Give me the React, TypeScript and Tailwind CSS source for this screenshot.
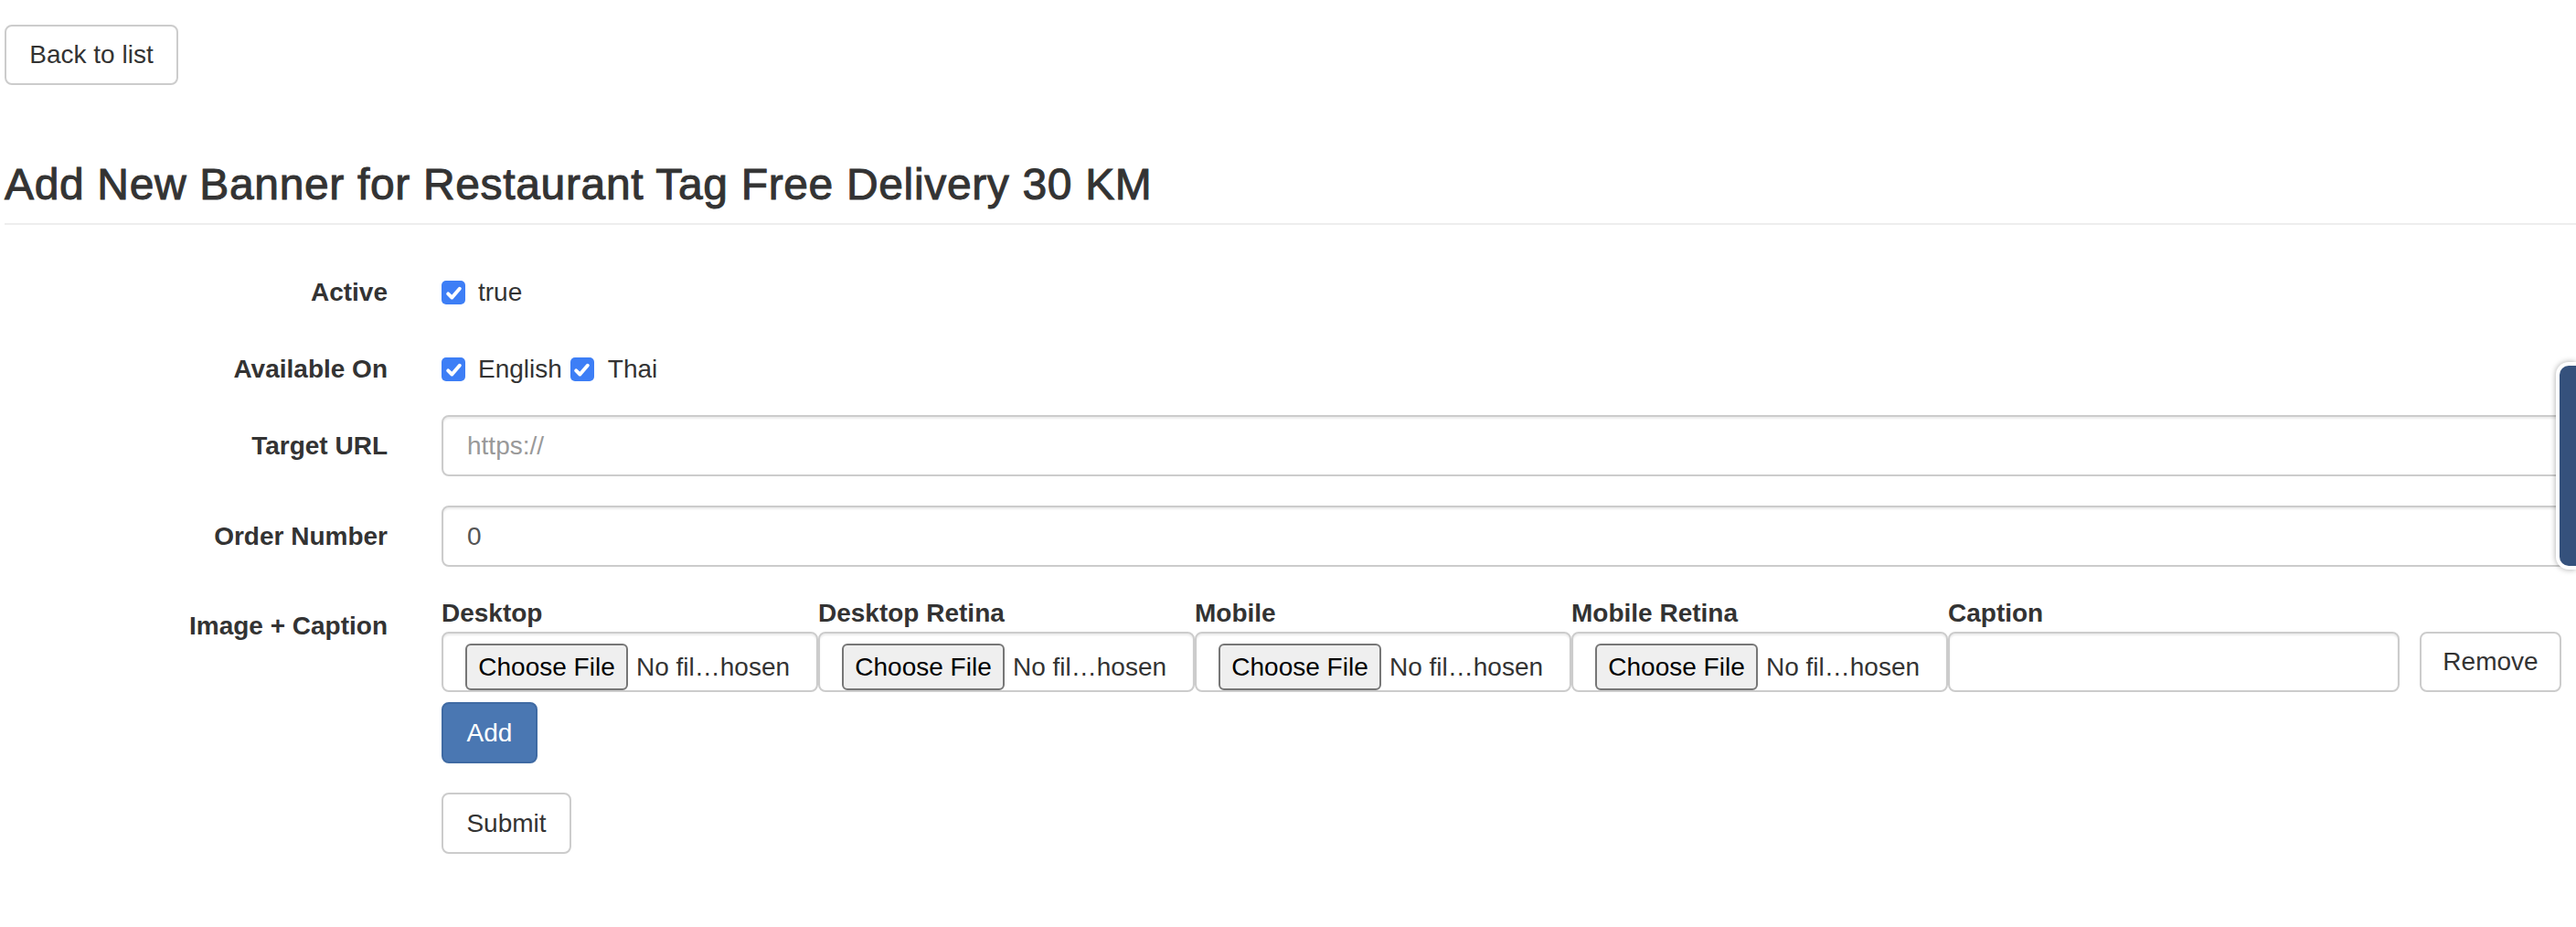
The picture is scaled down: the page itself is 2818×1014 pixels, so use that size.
import React from "react";

const Check = () => (
    <span className="inline-flex items-center justify-center w-[26px] h-[26px] rounded-[5px] bg-[#3d7ef6] shrink-0">
        <svg viewBox="0 0 16 16" className="w-[21px] h-[21px]">
            <path d="M3.2 8.6 L6.4 11.8 L12.8 4.4" fill="none" stroke="white" strokeWidth="3" strokeLinecap="round" strokeLinejoin="round" />
        </svg>
    </span>
);

const FileBox = () => (
    <div className="h-[66px] border-2 border-[#ccc] rounded-[8px] bg-white pl-[24px] pt-[11px] flex items-start overflow-hidden shadow-[inset_0_2px_2px_rgba(0,0,0,0.075)]">
        <span className="h-[51px] w-[178px] shrink-0 border-2 border-[#767676] rounded-[6px] bg-[#efefef] text-black flex items-center justify-center leading-[40px]">
            Choose File
        </span>
        <span className="ml-[9px] mt-[6px] whitespace-nowrap text-[#333]">No fil…hosen</span>
    </div>
);

function FormRow({ label, children, className = "" }: { label: string; children: React.ReactNode; className?: string }) {
    return (
        <div className={"flex " + className}>
            <div className="w-[424px] shrink-0 text-right font-bold pt-[14px]">{label}</div>
            <div className="ml-[59px] flex-1 min-w-0">{children}</div>
        </div>
    );
}

export default function App() {
    const columns = ["Desktop", "Desktop Retina", "Mobile", "Mobile Retina"];
    return (
        <div className="min-h-screen bg-white text-[#333] font-['Liberation_Sans',Arial,sans-serif] text-[28px] leading-[40px] overflow-hidden">
            <div className="pl-[5px] pt-[27px]">
                <button className="h-[66px] w-[190px] border-2 border-[#ccc] rounded-[8px] bg-white text-[#333]">
                    Back to list
                </button>
            </div>

            <div className="ml-[5px] mt-[82px] pb-[16px] border-b-2 border-[#eee]">
                <h3 className="text-[48px] leading-[53px] font-medium [-webkit-text-stroke:1px_#333] tracking-[0.65px]">
                    Add New Banner for Restaurant Tag Free Delivery 30 KM
                </h3>
            </div>

            <form className="mt-[40px]">
                <FormRow label="Active" className="mb-[30px]">
                    <div className="pt-[14px] h-[54px] flex items-start">
                        <div className="h-[40px] flex items-center">
                            <Check />
                            <span className="ml-[14px]">true</span>
                        </div>
                    </div>
                </FormRow>

                <FormRow label="Available On" className="mb-[30px]">
                    <div className="pt-[14px] h-[54px] flex items-start">
                        <div className="h-[40px] flex items-center">
                            <Check />
                            <span className="ml-[14px]">English</span>
                            <span className="ml-[9px] flex items-center">
                                <Check />
                            </span>
                            <span className="ml-[15px]">Thai</span>
                        </div>
                    </div>
                </FormRow>

                <FormRow label="Target URL" className="mb-[32px]">
                    <input
                        className="block w-full h-[67px] border-2 border-[#ccc] rounded-[8px] pl-[26px] text-[#555] placeholder:text-[#999] outline-none shadow-[inset_0_2px_2px_rgba(0,0,0,0.075)]"
                        placeholder="https://"
                    />
                </FormRow>

                <FormRow label="Order Number" className="mb-[31px]">
                    <input
                        className="block w-full h-[67px] border-2 border-[#ccc] rounded-[8px] pl-[26px] text-[#555] outline-none shadow-[inset_0_2px_2px_rgba(0,0,0,0.075)]"
                        defaultValue="0"
                    />
                </FormRow>

                <FormRow label="Image + Caption">
                    <div className="flex items-end">
                        <div className="grid grid-cols-[412px_412px_412px_412px_494px]">
                            {columns.map((c) => (
                                <div key={c} className="font-bold h-[40px]">{c}</div>
                            ))}
                            <div className="font-bold h-[40px]">Caption</div>
                            {columns.map((c) => (
                                <FileBox key={c + "-f"} />
                            ))}
                            <div className="h-[66px] border-2 border-[#ccc] rounded-[8px] bg-white shadow-[inset_0_2px_2px_rgba(0,0,0,0.075)]" />
                        </div>
                        <button type="button" className="ml-[22px] h-[66px] w-[155px] border-2 border-[#ccc] rounded-[8px] bg-white text-[#333]">
                            Remove
                        </button>
                    </div>
                    <button type="button" className="mt-[11px] h-[67px] w-[105px] border-2 border-[#3f6aa3] rounded-[8px] bg-[#4a77b2] text-white block">
                        Add
                    </button>
                    <button type="button" className="mt-[32px] h-[67px] w-[142px] border-2 border-[#ccc] rounded-[8px] bg-white text-[#333] block">
                        Submit
                    </button>
                </FormRow>
            </form>

            <div className="fixed right-0 top-[396px] w-[22px] h-[227px] bg-[#35517c] border-[4px] border-r-0 border-white rounded-l-[14px] shadow-[0_0_6px_rgba(0,0,0,0.35)]" />
        </div>
    );
}
